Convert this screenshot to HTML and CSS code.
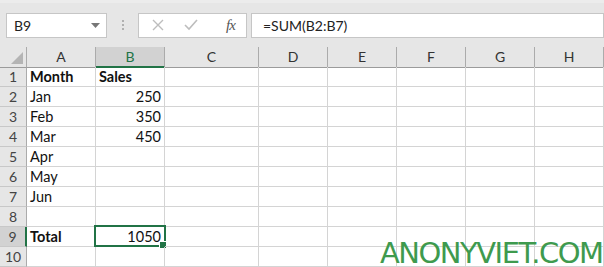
FILE: index.html
```html
<!DOCTYPE html>
<html lang="en">
<head>
  <meta charset="UTF-8" />
  <title>Sheet - SUM</title>
  <link rel="stylesheet" href="styles.css">
</head>
<body>
  <div class="app">

    <!-- Formula bar -->
    <div class="toolbar">
      <div class="name-box">
        <span>B9</span>
        <svg class="caret" width="9" height="5" viewBox="0 0 9 5"><path d="M0 0H9L4.5 5Z" fill="#777"/></svg>
      </div>
      <div class="grip"><i></i><i></i><i></i></div>
      <div class="fx-box">
        <svg class="fx-icon" width="12" height="12" viewBox="0 0 12 12"><path d="M1 1L11 11M11 1L1 11" stroke="#bdbdbd" stroke-width="1.4" fill="none"/></svg>
        <svg class="fx-icon" width="14" height="12" viewBox="0 0 14 12"><path d="M1 6L5 10L13 1" stroke="#bdbdbd" stroke-width="1.6" fill="none"/></svg>
        <span class="fx">fx</span>
      </div>
      <div class="formula">=SUM(B2:B7)</div>
    </div>

    <!-- Grid -->
    <div class="sheet">
      <div class="row head">
        <div class="corner"><span class="tri"></span></div>
        <div class="col">A</div><div class="col active">B</div><div class="col">C</div><div class="col">D</div>
        <div class="col">E</div><div class="col">F</div><div class="col">G</div><div class="col">H</div>
      </div>
      <div class="row">
        <div class="num">1</div><div class="cell bold">Month</div><div class="cell bold">Sales</div>
        <div class="cell"></div><div class="cell"></div><div class="cell"></div><div class="cell"></div><div class="cell"></div><div class="cell"></div>
      </div>
      <div class="row">
        <div class="num">2</div><div class="cell">Jan</div><div class="cell right">250</div>
        <div class="cell"></div><div class="cell"></div><div class="cell"></div><div class="cell"></div><div class="cell"></div><div class="cell"></div>
      </div>
      <div class="row">
        <div class="num">3</div><div class="cell">Feb</div><div class="cell right">350</div>
        <div class="cell"></div><div class="cell"></div><div class="cell"></div><div class="cell"></div><div class="cell"></div><div class="cell"></div>
      </div>
      <div class="row">
        <div class="num">4</div><div class="cell">Mar</div><div class="cell right">450</div>
        <div class="cell"></div><div class="cell"></div><div class="cell"></div><div class="cell"></div><div class="cell"></div><div class="cell"></div>
      </div>
      <div class="row">
        <div class="num">5</div><div class="cell">Apr</div><div class="cell"></div>
        <div class="cell"></div><div class="cell"></div><div class="cell"></div><div class="cell"></div><div class="cell"></div><div class="cell"></div>
      </div>
      <div class="row">
        <div class="num">6</div><div class="cell">May</div><div class="cell"></div>
        <div class="cell"></div><div class="cell"></div><div class="cell"></div><div class="cell"></div><div class="cell"></div><div class="cell"></div>
      </div>
      <div class="row">
        <div class="num">7</div><div class="cell">Jun</div><div class="cell"></div>
        <div class="cell"></div><div class="cell"></div><div class="cell"></div><div class="cell"></div><div class="cell"></div><div class="cell"></div>
      </div>
      <div class="row">
        <div class="num">8</div><div class="cell"></div><div class="cell"></div>
        <div class="cell"></div><div class="cell"></div><div class="cell"></div><div class="cell"></div><div class="cell"></div><div class="cell"></div>
      </div>
      <div class="row">
        <div class="num active">9</div><div class="cell bold">Total</div><div class="cell right selected">1050</div>
        <div class="cell"></div><div class="cell"></div><div class="cell"></div><div class="cell"></div><div class="cell"></div><div class="cell"></div>
      </div>
      <div class="row">
        <div class="num">10</div><div class="cell"></div><div class="cell"></div>
        <div class="cell"></div><div class="cell"></div><div class="cell"></div><div class="cell"></div><div class="cell"></div><div class="cell"></div>
      </div>
    </div>

    <div class="watermark">ANONYVIET.COM</div>
  </div>
</body>
</html>
```

FILE: styles.css
```css
/* Base */
* { margin: 0; padding: 0; box-sizing: border-box; }
body { font-family: 'Lato', 'Open Sans', sans-serif; background: #fff; overflow: hidden; }
.app { position: relative; width: 604px; height: 267px; background: #e6e6e6; }

/* Formula bar */
.toolbar {
  display: flex; align-items: center; gap: 4px;
  height: 47px; padding: 11px 0 11px 6px;
  border-top: 3px solid #ececec;
  background: #e6e6e6;
}
.toolbar > div { height: 25px; background: #fff; border: 1px solid #c6c6c6; }
.name-box { width: 101px; display: flex; align-items: center; justify-content: space-between; padding: 0 6px 0 7px; font-size: 14px; color: #222; }
.grip.grip { width: 23px; background: none; border: none; display: flex; flex-direction: column; align-items: center; justify-content: center; gap: 2px; }
.grip i { display: block; width: 2px; height: 2px; background: #b0b0b0; }
.fx-box { width: 109px; display: flex; align-items: center; padding-left: 13px; gap: 20px; }
.fx { font-family: 'Liberation Serif', serif; font-style: italic; font-size: 15px; color: #555; margin-left: 8px; letter-spacing: -1px; }
.formula { flex: 1; padding-left: 11px; font-size: 14px; line-height: 23px; color: #222; border-right: none; }

/* Sheet grid */
.sheet { background: #fff; }
.row { display: grid; grid-template-columns: 27px 69px 69px 94px 69px 69px 69px 69px 69px; height: 20px; }
.row.head { background: #e6e6e6; }
.corner { position: relative; border-right: 1px solid #ababab; border-bottom: 1px solid #9b9b9b; }
.tri { position: absolute; right: 3px; bottom: 3px; width: 0; height: 0; border-left: 12px solid transparent; border-bottom: 12px solid #b4b4b4; }
.col { border-right: 1px solid #ababab; border-bottom: 1px solid #9b9b9b; text-align: center; font-size: 14px; line-height: 19px; color: #333; }
.col.active { background: #d2d2d2; color: #217346; border-bottom: 2px solid #217346; }
.num { background: #e6e6e6; border-right: 1px solid #ababab; border-bottom: 1px solid #c8c8c8; text-align: center; font-size: 14px; line-height: 19px; color: #444; }
.num.active { background: #d2d2d2; border-right: 2px solid #217346; }
.cell { position: relative; border-right: 1px solid #d4d4d4; border-bottom: 1px solid #d4d4d4; padding: 0 3px; font-size: 14.5px; line-height: 19px; color: #111; white-space: nowrap; }
.bold { font-weight: 700; }
.right { text-align: right; }

/* Active cell */
.selected::before { content: ''; position: absolute; left: -2px; top: -2px; right: -2px; bottom: -1px; border: 2px solid #217346; }
.selected::after { content: ''; position: absolute; right: -3px; bottom: -3px; width: 6px; height: 6px; background: #217346; border: 1px solid #fff; }

/* Watermark */
.watermark {
  position: absolute; left: 380px; bottom: 0;
  font-family: 'DejaVu Sans', sans-serif; font-size: 29px; line-height: 28px; color: #3e9a4e;
  letter-spacing: -1.5px;
}
```
